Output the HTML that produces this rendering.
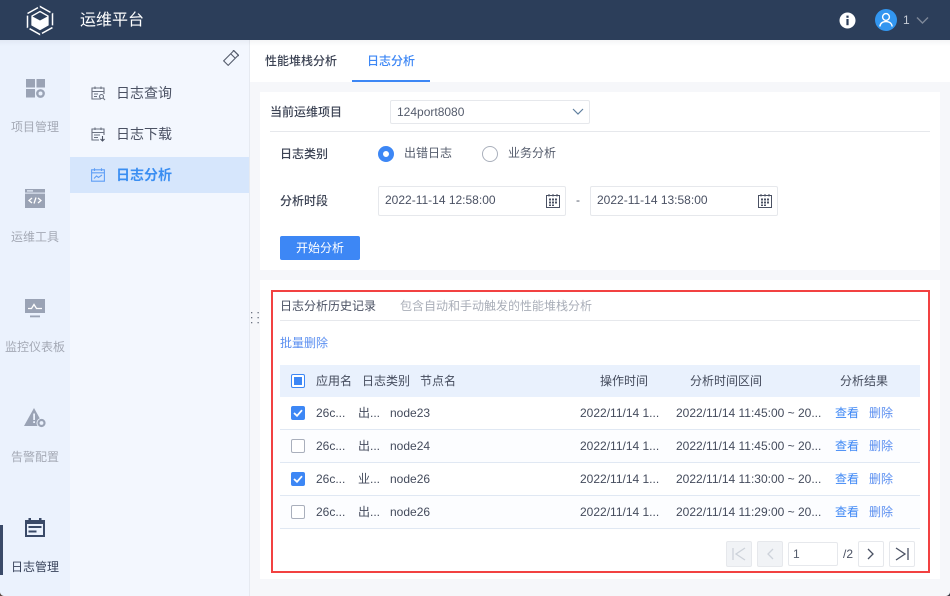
<!DOCTYPE html>
<html lang="zh">
<head>
<meta charset="utf-8">
<title>运维平台</title>
<style>
html,body{margin:0;padding:0;width:950px;height:596px;overflow:hidden;background:#f6f7fa}
*{box-sizing:border-box}
body{font-family:"Liberation Sans","Noto Sans CJK SC",sans-serif;font-size:12px;color:#444b5c;position:relative}
.a{position:absolute;white-space:nowrap}
.t{position:absolute;white-space:nowrap;line-height:16px;height:16px}
svg{position:absolute;display:block}
.nav{color:#a4a9b5;width:70px;text-align:center;left:0}
.sub{font-size:14px;color:#4a5163;left:116px}
.lbl{color:#3c4354;font-weight:500}
.box{position:absolute;background:#fff;border:1px solid #e6e8ec;border-radius:2px}
.row{position:absolute;left:280px;width:640px;height:33px;border-bottom:1px solid #e0e8f3}
.cb{position:absolute;left:291px;width:14px;height:14px;border-radius:2px;border:1px solid #a9afbc;background:#fff}
.cb.on{background:#3d87f5;border-color:#3d87f5}
.blue{color:#3d87f5}
.pg{position:absolute;top:541px;width:26px;height:26px;border:1px solid #e6e8ec;border-radius:2px;background:#fff}
.pg.d{background:#f1f3f6}
</style>
</head>
<body>
<!-- header -->
<div class="a" style="left:0;top:0;width:950px;height:40px;background:#2c3e5a"></div>
<svg style="left:26px;top:5px" width="28" height="31" viewBox="0 0 28 31" fill="none">
<path d="M14 1.500L26.500 8.500V22.500L14 29.500L1.500 22.500V8.500Z" stroke="#fff" stroke-width="1.500" stroke-dasharray="12 2.200"/>
<path d="M14 6.500L22 11V20L14 24.500L6 20V11Z" fill="#2c3e5a" stroke="#fff" stroke-width="1.300"/>
<path d="M6.500 11.500L14 15.500V24L6.500 19.800Z" fill="#fff"/>
<path d="M14 15.500L21.500 11.500V19.800L14 24Z" fill="#fff"/>
</svg>
<div class="t" style="left:80px;top:11px;font-size:16px;line-height:20px;height:20px;color:#fff">运维平台</div>
<svg style="left:839px;top:12px" width="17" height="17" viewBox="0 0 17 17"><circle cx="8.500" cy="8.500" r="8" fill="#fff"/><rect x="7.400" y="3.600" width="2.200" height="2.200" fill="#2c3e5a"/><rect x="7.400" y="7" width="2.200" height="6.200" fill="#2c3e5a"/></svg>
<svg style="left:875px;top:9px" width="22" height="22" viewBox="0 0 22 22" fill="none"><circle cx="11" cy="11" r="11" fill="#3296f0"/><circle cx="11" cy="8" r="3.400" stroke="#fff" stroke-width="1.400"/><path d="M4.800 17.500C5.400 14 8 12.600 11 12.600S16.600 14 17.200 17.500" stroke="#fff" stroke-width="1.400"/></svg>
<div class="t" style="left:903px;top:12px;color:#c6ccd6">1</div>
<svg style="left:916px;top:16px" width="13" height="9" viewBox="0 0 13 9" fill="none"><path d="M1 1.500L6.500 7L12 1.500" stroke="#7e8899" stroke-width="1.400"/></svg>

<!-- left nav -->
<div class="a" style="left:0;top:40px;width:70px;height:556px;background:#ebf2fd"></div>
<div class="a" style="left:70px;top:40px;width:180px;height:556px;background:#f3f7fe;border-right:1px solid #e6eaf1"></div>
<div class="a" style="left:0;top:525px;width:3px;height:50px;background:#3a4a68"></div>

<svg style="left:26px;top:79px" width="20" height="20" viewBox="0 0 20 20" fill="#9aa3b5"><rect x="0" y="0" width="9" height="8.500"/><rect x="10.500" y="0" width="8.500" height="8.500"/><rect x="0" y="10" width="9" height="8.500"/><circle cx="14.500" cy="14.500" r="3.200" fill="none" stroke="#9aa3b5" stroke-width="2.400"/></svg>
<div class="t nav" style="top:119px">项目管理</div>

<svg style="left:25px;top:189px" width="20" height="19" viewBox="0 0 20 19"><path d="M0 0H20V19H0Z" fill="#9aa3b5"/><rect x="0" y="3.600" width="20" height="1" fill="#ebf2fd"/><rect x="2" y="1.300" width="6" height="1.200" fill="#ebf2fd"/><path d="M7 9L4 11.500L7 14M13 9L16 11.500L13 14M11 8.500L9 14.500" fill="none" stroke="#fff" stroke-width="1.300"/></svg>
<div class="t nav" style="top:229px">运维工具</div>

<svg style="left:25px;top:299px" width="20" height="19" viewBox="0 0 20 19"><path d="M0 0H20V14H0Z" fill="#9aa3b5"/><rect x="5" y="16.500" width="10" height="1.800" fill="#9aa3b5"/><path d="M3 9.500H6.500L9 5.500L11.500 9.500H17" fill="none" stroke="#fff" stroke-width="1.300"/></svg>
<div class="t nav" style="top:339px">监控仪表板</div>

<svg style="left:24px;top:408px" width="23" height="20" viewBox="0 0 23 20"><path d="M10 0L20 18H0Z" fill="#9aa3b5"/><rect x="9.200" y="5.500" width="1.800" height="6.500" fill="#ebf2fd"/><rect x="9.200" y="13.200" width="1.800" height="1.800" fill="#ebf2fd"/><circle cx="17.500" cy="15" r="5" fill="#ebf2fd"/><circle cx="17.500" cy="15" r="3" fill="none" stroke="#9aa3b5" stroke-width="2.200"/></svg>
<div class="t nav" style="top:449px">告警配置</div>

<svg style="left:25px;top:518px" width="20" height="20" viewBox="0 0 20 20"><path d="M0 2H3.500V0H6V2H14V0H16.500V2H20V19H0Z" fill="#3a4a68"/><rect x="2" y="6" width="16" height="11" fill="#ebf2fd"/><rect x="3.500" y="8" width="13" height="2" fill="#3a4a68"/><rect x="3.500" y="12.500" width="8" height="2" fill="#3a4a68"/></svg>
<div class="t nav" style="top:559px;color:#38425a">日志管理</div>

<!-- sub nav -->
<svg style="left:223px;top:50px" width="16" height="16" viewBox="0 0 16 16" fill="none" stroke="#555c6c" stroke-width="1.100"><g transform="rotate(45 8 8)"><rect x="4.800" y="0.800" width="6.400" height="14.400"/><path d="M4.800 5.200H11.200M3.500 0.800H12.500"/></g></svg>
<svg style="left:91px;top:86px" width="15" height="15" viewBox="0 0 15 15" fill="none" stroke="#6a7180" stroke-width="1.100"><path d="M10 13H1V2H13V8M1 5.500H13M4 0.500V3M10 0.500V3M3 8H7M3 10.500H6"/><circle cx="10.500" cy="10.500" r="2"/><path d="M12 12L14 14"/></svg>
<div class="t sub" style="top:85px">日志查询</div>
<svg style="left:91px;top:127px" width="15" height="15" viewBox="0 0 15 15" fill="none" stroke="#6a7180" stroke-width="1.100"><path d="M8 13H1V2H13V8M1 5.500H13M4 0.500V3M10 0.500V3M3 8H9M3 10.500H7"/><path d="M11.500 9V14M9.500 12L11.500 14L13.500 12" stroke="#4a5163"/></svg>
<div class="t sub" style="top:126px">日志下载</div>
<div class="a" style="left:70px;top:157px;width:179px;height:36px;background:#d6e6fc"></div>
<svg style="left:91px;top:168px" width="14" height="14" viewBox="0 0 14 14" fill="none" stroke="#5f9ef5" stroke-width="1.100"><path d="M0.600 1.800H13.400V13.200H0.600ZM0.600 4.800H13.400M3.500 0.300V3M10.500 0.300V3"/><path d="M3 10.500L5.500 8L7.500 9.500L11 7"/></svg>
<div class="t sub" style="top:167px;color:#3a8ef2;font-weight:700">日志分析</div>

<!-- tabs -->
<div class="a" style="left:250px;top:40px;width:700px;height:42px;background:#fff"></div>
<div class="t" style="left:265px;top:53px;color:#3c4354;font-weight:500">性能堆栈分析</div>
<div class="t blue" style="left:367px;top:53px;font-weight:500">日志分析</div>
<div class="a" style="left:352px;top:80px;width:78px;height:2px;background:#3d87f5"></div>
<div class="a" style="left:0;top:40px;width:950px;height:6px;background:linear-gradient(rgba(40,50,80,.05),rgba(40,50,80,0))"></div>

<!-- form card -->
<div class="a" style="left:260px;top:92px;width:680px;height:178px;background:#fff"></div>
<div class="t lbl" style="left:270px;top:104px">当前运维项目</div>
<div class="box" style="left:390px;top:100px;width:200px;height:24px"></div>
<div class="t" style="left:397px;top:104px;color:#555c6c">124port8080</div>
<svg style="left:572px;top:108px" width="12" height="8" viewBox="0 0 12 8" fill="none"><path d="M1 1L6 6L11 1" stroke="#5f7f9f" stroke-width="1.200"/></svg>
<div class="a" style="left:270px;top:131px;width:660px;height:1px;background:#e6e8ec"></div>

<div class="t lbl" style="left:280px;top:146px">日志类别</div>
<div class="a" style="left:378px;top:146px;width:16px;height:16px;border-radius:50%;border:5px solid #3d87f5;background:#fff"></div>
<div class="t" style="left:404px;top:145px;color:#555c6c">出错日志</div>
<div class="a" style="left:482px;top:146px;width:16px;height:16px;border-radius:50%;border:1px solid #aab0bc;background:#fff"></div>
<div class="t" style="left:508px;top:145px;color:#555c6c">业务分析</div>

<div class="t lbl" style="left:280px;top:193px">分析时段</div>
<div class="box" style="left:378px;top:186px;width:188px;height:30px"></div>
<div class="t" style="left:385px;top:192px;color:#4a5163">2022-11-14 12:58:00</div>
<svg style="left:546px;top:194px" width="14" height="14" viewBox="0 0 14 14"><path d="M0.500 1.500H13.500V13.500H0.500Z" fill="none" stroke="#4a5163"/><path d="M3 0V2.500M7 0V2.500M11 0V2.500" stroke="#4a5163"/><path d="M3 4.500h2v2H3zM6 4.500h2v2H6zM9 4.500h2v2H9zM3 7.500h2v2H3zM6 7.500h2v2H6zM9 7.500h2v2H9zM3 10.500h2v1.500H3zM6 10.500h2v1.500H6z" fill="#4a5163"/></svg>
<div class="t" style="left:576px;top:192px;color:#555c6c">-</div>
<div class="box" style="left:590px;top:186px;width:188px;height:30px"></div>
<div class="t" style="left:597px;top:192px;color:#4a5163">2022-11-14 13:58:00</div>
<svg style="left:758px;top:194px" width="14" height="14" viewBox="0 0 14 14"><path d="M0.500 1.500H13.500V13.500H0.500Z" fill="none" stroke="#4a5163"/><path d="M3 0V2.500M7 0V2.500M11 0V2.500" stroke="#4a5163"/><path d="M3 4.500h2v2H3zM6 4.500h2v2H6zM9 4.500h2v2H9zM3 7.500h2v2H3zM6 7.500h2v2H6zM9 7.500h2v2H9zM3 10.500h2v1.500H3zM6 10.500h2v1.500H6z" fill="#4a5163"/></svg>
<div class="a" style="left:280px;top:236px;width:80px;height:24px;background:#3d87f5;border-radius:2px;color:#fff;text-align:center;line-height:24px">开始分析</div>

<!-- splitter dots -->
<svg style="left:251px;top:311px" width="9" height="14" viewBox="0 0 9 14" fill="#6a7180"><rect x="0" y="1" width="1.300" height="1.300"/><rect x="6.500" y="1" width="1.300" height="1.300"/><rect x="0" y="6" width="1.300" height="1.300"/><rect x="6.500" y="6" width="1.300" height="1.300"/><rect x="0" y="11" width="1.300" height="1.300"/><rect x="6.500" y="11" width="1.300" height="1.300"/></svg>

<!-- history card -->
<div class="a" style="left:260px;top:280px;width:680px;height:299px;background:#fff"></div>
<div class="a" style="left:271px;top:290px;width:659px;height:283px;border:2px solid #f24141"></div>
<div class="t" style="left:280px;top:298px;color:#4a5163">日志分析历史记录</div>
<div class="t" style="left:400px;top:298px;color:#a9aeb8">包含自动和手动触发的性能堆栈分析</div>
<div class="a" style="left:280px;top:320px;width:640px;height:1px;background:#e6e8ec"></div>
<div class="t" style="left:280px;top:335px;color:#5b8ff0">批量删除</div>

<div class="a" style="left:280px;top:365px;width:640px;height:32px;background:#e9f1fd"></div>
<div class="cb" style="top:374px;border-color:#3d87f5;background:#fff"></div>
<div class="a" style="left:294px;top:377px;width:8px;height:8px;background:#3d87f5"></div>
<div class="t" style="left:316px;top:373px">应用名</div>
<div class="t" style="left:362px;top:373px">日志类别</div>
<div class="t" style="left:420px;top:373px">节点名</div>
<div class="t" style="left:600px;top:373px">操作时间</div>
<div class="t" style="left:690px;top:373px">分析时间区间</div>
<div class="t" style="left:840px;top:373px">分析结果</div>

<div class="row" style="top:397px;background:#fff"></div>
<div class="row" style="top:430px;background:#fcfdff"></div>
<div class="row" style="top:463px;background:#fff"></div>
<div class="row" style="top:496px;background:#fcfdff"></div>

<div class="cb on" style="top:406px"></div>
<svg style="left:293px;top:409px" width="10" height="8" viewBox="0 0 10 8" fill="none"><path d="M1 4L4 6.800L9 1.200" stroke="#fff" stroke-width="1.800"/></svg>
<div class="t" style="left:316px;top:405px">26c...</div><div class="t" style="left:358px;top:405px">出...</div><div class="t" style="left:390px;top:405px">node23</div>
<div class="t" style="left:580px;top:405px">2022/11/14 1...</div><div class="t" style="left:676px;top:405px">2022/11/14 11:45:00 ~ 20...</div>
<div class="t blue" style="left:835px;top:405px">查看</div><div class="t" style="left:869px;top:405px;color:#5b8ff0">删除</div>

<div class="cb" style="top:439px"></div>
<div class="t" style="left:316px;top:438px">26c...</div><div class="t" style="left:358px;top:438px">出...</div><div class="t" style="left:390px;top:438px">node24</div>
<div class="t" style="left:580px;top:438px">2022/11/14 1...</div><div class="t" style="left:676px;top:438px">2022/11/14 11:45:00 ~ 20...</div>
<div class="t blue" style="left:835px;top:438px">查看</div><div class="t" style="left:869px;top:438px;color:#5b8ff0">删除</div>

<div class="cb on" style="top:472px"></div>
<svg style="left:293px;top:475px" width="10" height="8" viewBox="0 0 10 8" fill="none"><path d="M1 4L4 6.800L9 1.200" stroke="#fff" stroke-width="1.800"/></svg>
<div class="t" style="left:316px;top:471px">26c...</div><div class="t" style="left:358px;top:471px">业...</div><div class="t" style="left:390px;top:471px">node26</div>
<div class="t" style="left:580px;top:471px">2022/11/14 1...</div><div class="t" style="left:676px;top:471px">2022/11/14 11:30:00 ~ 20...</div>
<div class="t blue" style="left:835px;top:471px">查看</div><div class="t" style="left:869px;top:471px;color:#5b8ff0">删除</div>

<div class="cb" style="top:505px"></div>
<div class="t" style="left:316px;top:504px">26c...</div><div class="t" style="left:358px;top:504px">出...</div><div class="t" style="left:390px;top:504px">node26</div>
<div class="t" style="left:580px;top:504px">2022/11/14 1...</div><div class="t" style="left:676px;top:504px">2022/11/14 11:29:00 ~ 20...</div>
<div class="t blue" style="left:835px;top:504px">查看</div><div class="t" style="left:869px;top:504px;color:#5b8ff0">删除</div>

<!-- pagination -->
<div class="pg d" style="left:726px"></div>
<svg style="left:732px;top:547px" width="14" height="14" viewBox="0 0 14 14" fill="none" stroke="#cdd2da" stroke-width="1.300"><path d="M1 1V13M13 1L4 7L13 13"/></svg>
<div class="pg d" style="left:757px"></div>
<svg style="left:766px;top:548px" width="8" height="12" viewBox="0 0 8 12" fill="none" stroke="#cdd2da" stroke-width="1.300"><path d="M7 1L2 6L7 11"/></svg>
<div class="box" style="left:788px;top:542px;width:50px;height:24px"></div>
<div class="t" style="left:793px;top:546px;color:#555c6c">1</div>
<div class="t" style="left:843px;top:546px;color:#4a5163">/2</div>
<div class="pg" style="left:858px"></div>
<svg style="left:867px;top:548px" width="8" height="12" viewBox="0 0 8 12" fill="none" stroke="#4a5163" stroke-width="1.300"><path d="M1 1L6 6L1 11"/></svg>
<div class="pg" style="left:889px"></div>
<svg style="left:895px;top:547px" width="14" height="14" viewBox="0 0 14 14" fill="none" stroke="#4a5163" stroke-width="1.300"><path d="M1 1L10 7L1 13M13 1V13"/></svg>

<!-- window corners -->
<svg style="left:0;top:592px" width="4" height="4" viewBox="0 0 4 4"><path d="M0 0C0 2 2 4 4 4H0Z" fill="#5a4a42"/></svg>
<svg style="left:946px;top:592px" width="4" height="4" viewBox="0 0 4 4"><path d="M4 0C4 2 2 4 0 4H4Z" fill="#3a3a44"/></svg>
</body>
</html>
